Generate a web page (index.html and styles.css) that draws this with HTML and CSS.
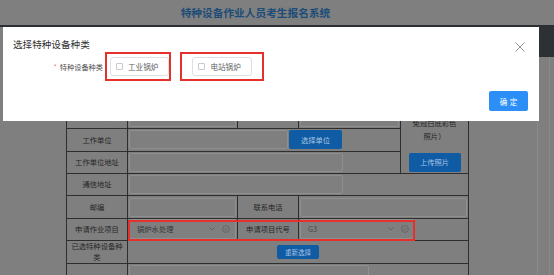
FILE: index.html
```html
<!DOCTYPE html>
<html lang="zh-CN">
<head>
    <meta charset="UTF-8">
    <meta name="viewport" content="width=device-width, initial-scale=1.0">
    <title>特种设备作业人员考生报名系统</title>
    <link rel="stylesheet" href="styles.css">
</head>
<body>
    <div class="header">特种设备作业人员考生报名系统</div>

    <div class="page">
        <div class="main">
            <table class="form-table">
                <colgroup>
                    <col class="col-label">
                    <col class="col-value">
                    <col class="col-label">
                    <col class="col-value2">
                    <col class="col-photo">
                </colgroup>
                <tr>
                    <td class="lbl">身份证号</td>
                    <td><div class="ipt"></div></td>
                    <td class="lbl">出生日期</td>
                    <td><div class="ipt"></div></td>
                    <td class="photo" rowspan="4">
                        <div class="photo-tip">（请上传一寸<br>免冠白底彩色<br>照片）</div>
                        <button class="btn-blue btn-photo">上传照片</button>
                    </td>
                </tr>
                <tr>
                    <td class="lbl">文化程度</td>
                    <td><div class="ipt"></div></td>
                    <td class="lbl">手机号码</td>
                    <td><div class="ipt"></div></td>
                </tr>
                <tr>
                    <td class="lbl">工作单位</td>
                    <td colspan="3">
                        <div class="unit-field">
                            <div class="ipt ipt-unit"></div>
                            <button class="btn-blue btn-unit">选择单位</button>
                        </div>
                    </td>
                </tr>
                <tr>
                    <td class="lbl">工作单位地址</td>
                    <td colspan="3"><div class="ipt ipt-addr"></div></td>
                </tr>
                <tr>
                    <td class="lbl">通信地址</td>
                    <td colspan="4"><div class="ipt ipt-addr"></div></td>
                </tr>
                <tr>
                    <td class="lbl">邮编</td>
                    <td><div class="ipt"></div></td>
                    <td class="lbl">联系电话</td>
                    <td colspan="2"><div class="ipt"></div></td>
                </tr>
                <tr>
                    <td class="lbl">申请作业项目</td>
                    <td class="sel-cell">
                        <div class="sel">
                            <span class="sel-text">锅炉水处理</span>
                            <svg class="sel-arrow" viewBox="0 0 6 4"><path d="M0.5 0.5 L3 3 L5.5 0.5" fill="none" stroke="#5c5c5c" stroke-width="0.8"/></svg>
                            <svg class="sel-clear" viewBox="0 0 8 8"><circle cx="4" cy="4" r="3.4" fill="none" stroke="#5c5c5c" stroke-width="0.7"/><path d="M2.4 4.1 L3.6 5.2 L5.6 3" fill="none" stroke="#5c5c5c" stroke-width="0.7"/></svg>
                        </div>
                        <div class="annot"></div>
                    </td>
                    <td class="lbl">申请项目代号</td>
                    <td colspan="2">
                        <div class="sel sel-code">
                            <span class="sel-text">G3</span>
                            <svg class="sel-arrow" viewBox="0 0 6 4"><path d="M0.5 0.5 L3 3 L5.5 0.5" fill="none" stroke="#5c5c5c" stroke-width="0.8"/></svg>
                            <svg class="sel-clear" viewBox="0 0 8 8"><circle cx="4" cy="4" r="3.4" fill="none" stroke="#5c5c5c" stroke-width="0.7"/><path d="M2.4 4.1 L3.6 5.2 L5.6 3" fill="none" stroke="#5c5c5c" stroke-width="0.7"/></svg>
                        </div>
                    </td>
                </tr>
                <tr>
                    <td class="lbl">已选特种设备种类</td>
                    <td colspan="4"><button class="btn-blue btn-small">重新选择</button></td>
                </tr>
                <tr>
                    <td class="lbl"></td>
                    <td colspan="4"><div class="ipt ipt-last"></div></td>
                </tr>
            </table>
        </div>
        <div class="side">
            <div class="side-top"></div>
            <div class="side-rest"></div>
        </div>
    </div>

    <!-- 选择特种设备种类弹窗 -->
    <div class="modal">
        <div class="modal-header">
            <span class="modal-title">选择特种设备种类</span>
            <svg class="modal-close" viewBox="0 0 10 10"><path d="M0.5 0.5 L9.5 9.5 M9.5 0.5 L0.5 9.5" stroke="#909399" stroke-width="1"/></svg>
        </div>
        <div class="modal-body">
            <div class="field-label"><span class="req">*</span>特种设备种类</div>
            <div class="mark">
                <label class="cb-item"><span class="cb-box"></span>工业锅炉</label>
            </div>
            <div class="mark mark-wide">
                <label class="cb-item"><span class="cb-box"></span>电站锅炉</label>
            </div>
        </div>
        <div class="modal-footer">
            <button class="btn-ok">确定</button>
        </div>
    </div>
</body>
</html>
```

FILE: styles.css
```css
/* Estilos generales */
* {
    margin: 0;
    padding: 0;
    box-sizing: border-box;
}

html, body {
    height: 100%;
}

body {
    font-family: "Noto Sans CJK SC", "Noto Sans", sans-serif;
    background-color: #7f7f7f;
    overflow: hidden;
    position: relative;
}

button {
    font-family: inherit;
    border: none;
    outline: none;
    cursor: pointer;
}

/* Cabecera */
.header {
    height: 27px;
    line-height: 25px;
    border-bottom: 2px solid #2b2e33;
    padding-right: 43px;
    text-align: center;
    font-size: 10.7px;
    font-weight: bold;
    color: #1c4c78;
}

.page {
    display: flex;
    height: calc(100% - 27px);
}

.main {
    flex: 1;
    border-right: 1px solid #8c8c8c;
    padding: 56.4px 0 0 66px;
}

.side {
    width: 16px;
    display: flex;
    flex-direction: column;
}

.side-top {
    height: 30px;
    margin-left: 1px;
    background-color: #2d3035;
}

.side-rest {
    flex: 1;
    margin-left: 11px;
    border-left: 1px solid #8a8a8a;
}

/* Tabla del formulario */
.form-table {
    border-collapse: collapse;
    table-layout: fixed;
    width: 402px;
}

.col-label { width: 61px; }
.col-value { width: 110px; }
.col-value2 { width: 102px; }
.col-photo { width: 68px; }

.form-table tr {
    height: 22.4px;
}

.form-table td {
    border: 1px solid #2e2e2e;
    padding: 0 1px;
    vertical-align: middle;
    font-size: 7.3px;
    line-height: 10.5px;
    color: #262626;
}

.form-table td.lbl {
    padding: 0 3px;
    text-align: center;
}

.ipt {
    height: 19px;
    border: 1px solid #8f8f8f;
    border-radius: 2px;
}

.ipt-unit { width: 159px; }
.ipt-addr { width: 214px; }
.ipt-last { width: 240px; }

.unit-field {
    display: flex;
    gap: 1px;
}

.btn-blue {
    display: block;
    height: 19px;
    background-color: #0f5ba4;
    color: #a8c4e2;
    font-size: 7.3px;
    border-radius: 2px;
    text-align: center;
}

.btn-unit { width: 53px; }

.btn-photo {
    width: 52px;
    margin: 0 auto;
}

.btn-small {
    width: 42px;
    height: 14px;
    margin: 0 auto;
    font-size: 6.5px;
}

.form-table td.photo {
    vertical-align: bottom;
    text-align: center;
    padding-bottom: 1px;
}

.photo-tip {
    line-height: 13px;
    margin-bottom: 10px;
}

/* Selectores */
.sel {
    display: flex;
    align-items: center;
    height: 20px;
    border: 1px solid #8f8f8f;
    border-radius: 2px;
    padding: 0 5px 0 7px;
    color: #363636;
}

.sel-code {
    width: 115px;
    color: #4a4a4a;
}

.sel-text {
    flex: 1;
}

.sel-arrow {
    width: 6px;
    height: 4px;
    margin-right: 7px;
}

.sel-clear {
    width: 8px;
    height: 8px;
}

.sel-cell {
    position: relative;
}

/* Marca roja de anotación */
.annot {
    position: absolute;
    left: 0;
    top: 1px;
    width: 287px;
    height: 21px;
    border: 2px solid #e5312b;
}

/* Modal */
.modal {
    position: absolute;
    top: 27px;
    left: 3px;
    width: 536px;
    height: 94px;
    background-color: #fff;
    display: flex;
    flex-direction: column;
}

.modal-header {
    display: flex;
    justify-content: space-between;
    align-items: flex-start;
    padding: 10px 14px 0 10px;
}

.modal-title {
    font-size: 9.6px;
    line-height: 14px;
    color: #303133;
}

.modal-close {
    width: 10px;
    height: 10px;
    margin-top: 5px;
}

.modal-body {
    display: flex;
    align-items: center;
}

.field-label {
    flex: none;
    width: 100px;
    text-align: right;
    font-size: 7.2px;
    line-height: 10px;
    color: #4d4d4d;
}

.req {
    color: #f56c6c;
    margin-right: 3px;
}

.mark {
    margin-left: 2px;
    padding: 3px 0 3px 3px;
    border: 2px solid #e5312b;
}

.mark-wide {
    margin-left: 9px;
    padding: 3px 10px;
}

.cb-item {
    display: flex;
    align-items: center;
    height: 19px;
    padding: 0 10px 0 5px;
    border: 1px solid #dcdfe6;
    border-radius: 3px;
    font-size: 7.6px;
    color: #606266;
}

.cb-box {
    width: 7px;
    height: 7px;
    margin-right: 5px;
    border: 1px solid #c6c9cf;
    border-radius: 1px;
    background-color: #fff;
}

.modal-footer {
    margin-top: auto;
    display: flex;
    justify-content: flex-end;
    padding: 0 11px 10px;
}

.btn-ok {
    width: 39px;
    height: 20px;
    padding-left: 2.5px;
    background-color: #2b8ff7;
    color: #fff;
    font-size: 7.5px;
    letter-spacing: 2.5px;
    border-radius: 2px;
}
```
